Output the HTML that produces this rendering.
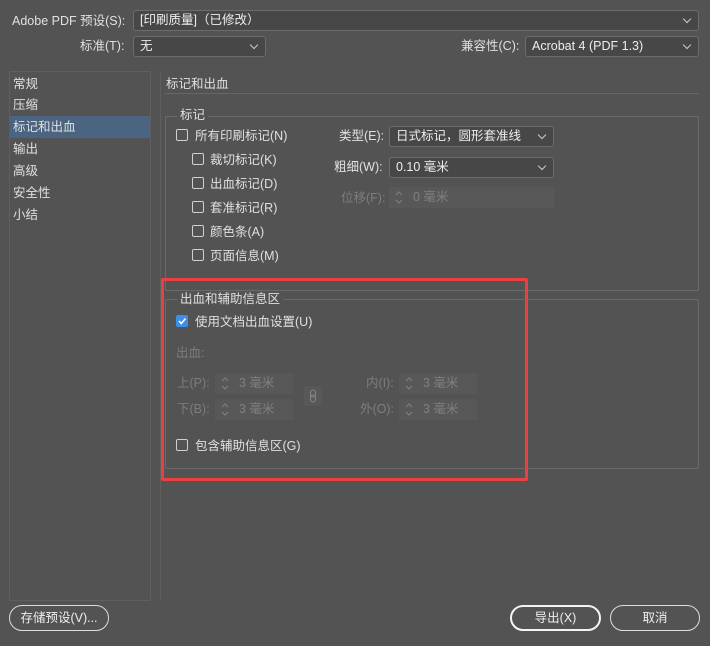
<!DOCTYPE html>
<html><head><meta charset="utf-8"><style>
*{box-sizing:border-box;margin:0;padding:0}
body{width:710px;height:646px;background:#535353;font-family:"Liberation Sans","Noto Sans CJK SC",sans-serif;font-size:12.5px;color:#e0e0e0;position:relative;overflow:hidden}
.a{position:absolute;white-space:nowrap;line-height:16px}
.dd{position:absolute;background:#474747;border:1px solid #6c6c6c;border-radius:3px;padding-left:6px;line-height:18px;color:#eee}
.dd:after{content:"";position:absolute;right:8px;top:5px;width:5px;height:5px;border-right:1px solid #ccc;border-bottom:1px solid #ccc;transform:rotate(45deg)}
.cb{position:absolute;width:12px;height:12px;border:1px solid #cfcfcf;border-radius:2px}
.dim{color:#7d7d7d}
.sp{position:absolute;background:#585858;height:21px;line-height:21px;color:#808080;padding-left:24px}
.sp svg{position:absolute;left:5px;top:3px}
.grp{position:absolute;border:1px solid #6a6a6a;border-radius:2px}
.btn{position:absolute;height:26px;border:1px solid #ddd;border-radius:13px;text-align:center;line-height:24px;color:#eee}
</style></head><body>
<div class="a" style="left:12px;top:13px">Adobe PDF 预设(S):</div>
<div class="dd" style="left:133px;top:10px;width:566px;height:21px">[印刷质量]（已修改）</div>
<div class="a" style="left:80px;top:38px">标准(T):</div>
<div class="dd" style="left:133px;top:36px;width:133px;height:21px">无</div>
<div class="a" style="left:461px;top:38px">兼容性(C):</div>
<div class="dd" style="left:525px;top:36px;width:174px;height:21px">Acrobat 4 (PDF 1.3)</div>

<div class="grp" style="left:9px;top:71px;width:142px;height:530px;border-color:#5f5f5f"></div>
<div style="position:absolute;left:10px;top:116px;width:140px;height:22px;background:#4a6481"></div>
<div class="a" style="left:13px;top:76px">常规</div>
<div class="a" style="left:13px;top:97px">压缩</div>
<div class="a" style="left:13px;top:119px">标记和出血</div>
<div class="a" style="left:13px;top:141px">输出</div>
<div class="a" style="left:13px;top:163px">高级</div>
<div class="a" style="left:13px;top:185px">安全性</div>
<div class="a" style="left:13px;top:207px">小结</div>

<div style="position:absolute;left:160px;top:71px;width:1px;height:530px;background:#5f5f5f"></div>
<div class="a" style="left:166px;top:76px">标记和出血</div>
<div style="position:absolute;left:165px;top:93px;width:534px;height:1px;background:#666"></div>

<div class="grp" style="left:165px;top:116px;width:534px;height:175px"></div>
<div class="a" style="left:177px;top:107px;background:#535353;padding:0 3px">标记</div>
<div class="cb" style="left:176px;top:129px"></div><div class="a" style="left:195px;top:128px">所有印刷标记(N)</div>
<div class="cb" style="left:192px;top:153px"></div><div class="a" style="left:210px;top:152px">裁切标记(K)</div>
<div class="cb" style="left:192px;top:177px"></div><div class="a" style="left:210px;top:176px">出血标记(D)</div>
<div class="cb" style="left:192px;top:201px"></div><div class="a" style="left:210px;top:200px">套准标记(R)</div>
<div class="cb" style="left:192px;top:225px"></div><div class="a" style="left:210px;top:224px">颜色条(A)</div>
<div class="cb" style="left:192px;top:249px"></div><div class="a" style="left:210px;top:248px">页面信息(M)</div>
<div class="a" style="left:339px;top:128px">类型(E):</div>
<div class="dd" style="left:389px;top:126px;width:165px;height:21px">日式标记，圆形套准线</div>
<div class="a" style="left:334px;top:159px">粗细(W):</div>
<div class="dd" style="left:389px;top:157px;width:165px;height:21px">0.10 毫米</div>
<div class="a dim" style="left:341px;top:190px">位移(F):</div>
<div class="sp" style="left:389px;top:187px;width:165px"><svg width="10" height="15"><path d="M2 5 L5 2 L8 5 M2 10 L5 13 L8 10" stroke="#808080" fill="none"/></svg>0 毫米</div>

<div class="grp" style="left:165px;top:299px;width:534px;height:170px"></div>
<div class="a" style="left:177px;top:291px;background:#535353;padding:0 3px">出血和辅助信息区</div>
<div class="cb" style="left:176px;top:315px;background:#3d8ee6;border-color:#3d8ee6"><svg width="10" height="10" style="position:absolute;left:0;top:0"><path d="M2 5 L4.3 7.5 L8.5 2.5" stroke="#fff" stroke-width="1.6" fill="none"/></svg></div>
<div class="a" style="left:195px;top:314px">使用文档出血设置(U)</div>
<div class="a dim" style="left:176px;top:345px">出血:</div>
<div class="a dim" style="left:177px;top:375px">上(P):</div>
<div class="sp" style="left:215px;top:373px;width:78px"><svg width="10" height="15"><path d="M2 5 L5 2 L8 5 M2 10 L5 13 L8 10" stroke="#808080" fill="none"/></svg>3 毫米</div>
<div class="a dim" style="left:177px;top:401px">下(B):</div>
<div class="sp" style="left:215px;top:399px;width:78px"><svg width="10" height="15"><path d="M2 5 L5 2 L8 5 M2 10 L5 13 L8 10" stroke="#808080" fill="none"/></svg>3 毫米</div>
<div style="position:absolute;left:304px;top:386px;width:18px;height:20px;background:#585858"><svg width="18" height="20"><rect x="6.5" y="4" width="5" height="7" rx="2.5" stroke="#888" fill="none"/><rect x="6.5" y="9" width="5" height="7" rx="2.5" stroke="#888" fill="none"/></svg></div>
<div class="a dim" style="left:366px;top:375px">内(I):</div>
<div class="sp" style="left:399px;top:373px;width:78px"><svg width="10" height="15"><path d="M2 5 L5 2 L8 5 M2 10 L5 13 L8 10" stroke="#808080" fill="none"/></svg>3 毫米</div>
<div class="a dim" style="left:360px;top:401px">外(O):</div>
<div class="sp" style="left:399px;top:399px;width:78px"><svg width="10" height="15"><path d="M2 5 L5 2 L8 5 M2 10 L5 13 L8 10" stroke="#808080" fill="none"/></svg>3 毫米</div>
<div class="cb" style="left:176px;top:439px"></div><div class="a" style="left:195px;top:438px">包含辅助信息区(G)</div>

<div style="position:absolute;left:161px;top:278px;width:367px;height:203px;border:3px solid #e8413f;border-radius:2px"></div>

<div class="btn" style="left:9px;top:605px;width:100px">存储预设(V)...</div>
<div class="btn" style="left:510px;top:605px;width:91px;border:2px solid #f4f4f4;line-height:22px">导出(X)</div>
<div class="btn" style="left:610px;top:605px;width:90px">取消</div>
</body></html>
